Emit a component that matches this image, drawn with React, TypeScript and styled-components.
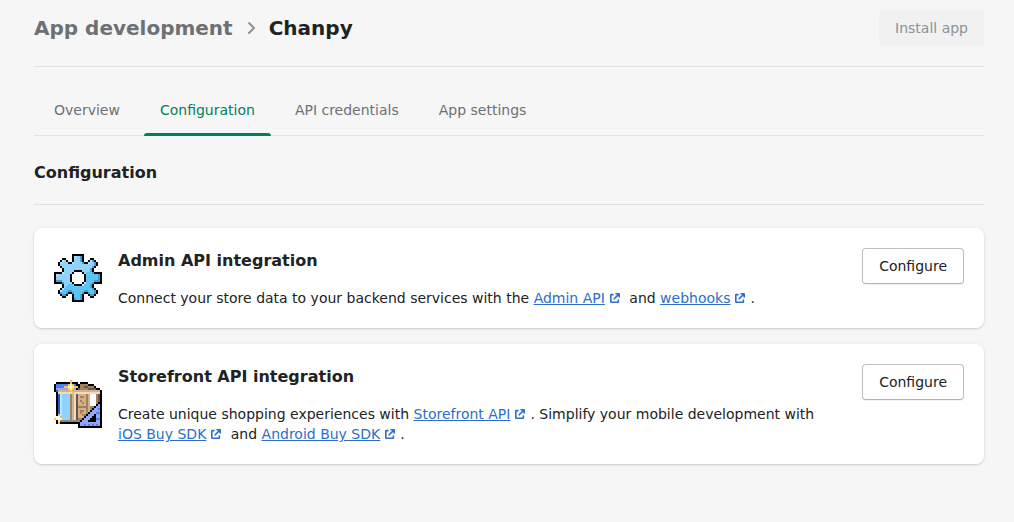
import React from "react";
import styled, { createGlobalStyle } from "styled-components";

const Global = createGlobalStyle`
  *, *::before, *::after { box-sizing: border-box; }
  body { margin: 0; background: #f6f6f6; color: #202223;
    font: 400 14px/20px "DejaVu Sans", sans-serif; }
  h1, h2, h3, p { margin: 0; }
`;

const Page = styled.main`
  padding: 10px 30px 0 34px;
  min-height: 522px;
`;
const Header = styled.header`
  display: flex;
  justify-content: space-between;
  align-items: flex-start;
  height: 57px;
  border-bottom: 1px solid #e2e2e3;
`;
const Breadcrumb = styled.h1`
  display: flex;
  align-items: center;
  height: 36px;
  font-size: 20px;
  line-height: 28px;
  font-weight: 700;
`;
const Parent = styled.span`
  color: #6d7175;
`;
const Chevron = styled.svg`
  width: 20px;
  height: 20px;
  margin: 0 8px;
  fill: #8c9196;
`;
const Button = styled.button<{ $muted?: boolean }>`
  flex: none;
  height: 36px;
  padding: 0 16px;
  font: inherit;
  border-radius: 4px;
  border: ${(p) => (p.$muted ? "none" : "1px solid #babfc3")};
  border-bottom-color: #aeb4b9;
  background: ${(p) => (p.$muted ? "#f1f1f1" : "#fff")};
  color: ${(p) => (p.$muted ? "#8c9196" : "#202223")};
  box-shadow: ${(p) => (p.$muted ? "none" : "0 1px 0 rgba(0, 0, 0, 0.05)")};
`;
const Tabs = styled.nav`
  display: flex;
  gap: 8px;
  height: 69px;
  padding: 17px 4px 0;
  border-bottom: 1px solid #e2e2e3;
`;
const Tab = styled.a<{ $active?: boolean }>`
  height: 52px;
  padding: 16px 16px 0;
  color: ${(p) => (p.$active ? "#008060" : "#6d7175")};
  position: relative;
  &::after {
    content: "";
    display: ${(p) => (p.$active ? "block" : "none")};
    position: absolute;
    left: 0;
    right: 0;
    bottom: 0;
    height: 3px;
    background: #008060;
    border-radius: 3px 3px 0 0;
  }
`;
const SectionTitle = styled.h2`
  height: 69px;
  padding-top: 25px;
  font-size: 16px;
  line-height: 24px;
  font-weight: 700;
  border-bottom: 1px solid #e2e2e3;
`;
const Cards = styled.div`
  display: flex;
  flex-direction: column;
  gap: 16px;
  padding-top: 23px;
`;
const Card = styled.section`
  display: flex;
  align-items: flex-start;
  padding: 20px;
  background: #fff;
  border-radius: 8px;
  box-shadow: 0 0 5px rgba(23, 24, 24, 0.05), 0 1px 2px rgba(0, 0, 0, 0.15);
`;
const Art = styled.svg`
  flex: none;
  align-self: center;
  width: 48px;
  height: 48px;
`;
const Body = styled.div`
  flex: 1;
  padding: 0 32px 0 16px;
`;
const CardTitle = styled.h3`
  font-size: 16px;
  line-height: 24px;
  font-weight: 700;
  padding-top: 1px;
  margin-bottom: 15px;
`;
const Link = styled.a`
  color: #2c6ecb;
  text-decoration: underline;
`;
const LinkIcon = styled.svg`
  width: 20px;
  height: 20px;
  margin: -4px 0;
  vertical-align: -1px;
  fill: #2c6ecb;
`;

const External = ({ children }: { children: string }) => (
  <>
    <Link>{children}</Link>
    <LinkIcon viewBox="0 0 20 20" aria-hidden="true">
      <path d="M11 5h3a1 1 0 0 1 1 1v3a.8.8 0 0 1-1.600 0V7.700l-3.800 3.800a.8.8 0 0 1-1.100-1.100l3.800-3.800H11A.8.8 0 0 1 11 5z" />
      <path d="M5 7a1.200 1.200 0 0 1 1.200-1.200H8a.8.8 0 0 1 0 1.600H6.600v6h6V12a.8.8 0 0 1 1.600 0v1.800a1.200 1.200 0 0 1-1.200 1.200H6.200A1.200 1.200 0 0 1 5 13.800z" />
    </LinkIcon>
  </>
);

const palette: Record<string, string> = {
  k: "#000000",
  w: "#ffffff",
  h: "#b9e6fd",
  a: "#8fd3fa",
  s: "#5cc4f0",
  t: "#3a9fd4",
  B: "#4b7ff2",
  D: "#3157c9",
  b: "#8fa6fb",
  c: "#b5e7fb",
  n: "#d3b18a",
  l: "#f0dac2",
  m: "#a5805f",
  d: "#6b5548",
  g: "#85878b",
  y: "#ffc445",
  Y: "#fff6b8",
};

// Upper-left quarter of the cog; the other three are mirrored from it.
const cogQuarter = [
  ".........kkk",
  ".........kaa",
  "....kk...kaa",
  "...kaak..kaa",
  "..kaaaakkaaa",
  "..kaaaaaaaaa",
  "...kaaaaaaaa",
  "....kaaaaaaa",
  "....kaaaaakk",
  "kkkkaaaaakww",
  "kaaaaaaakwww",
  "kaaaaaaakwww",
];
const mirror = (s: string) => s + s.split("").reverse().join("");
const cogTop = cogQuarter.map(mirror);
const cogShape = [...cogTop, ...[...cogTop].reverse()];
const gear = cogShape.map((row, y) =>
  row
    .split("")
    .map((c, x) => {
      if (c !== "a") return c;
      const at = (cx: number, cy: number) => cogShape[cy][cx];
      if (y > 12 && at(x, y + 1) === "k" && x !== 11 && x !== 12) return "t";
      if (x > 12 && at(x + 1, y) === "k") return "t";
      if (at(x - 1, y) === "k" && at(x, y - 1) === "k") return "h";
      return x + y * 1.5 > 29 ? "s" : "a";
    })
    .join("")
);

const storefront = [
  "........y...............",
  ".kkkkkkkykkk.kkkk.......",
  "kBBBBBByYyBkkmmmmkkk....",
  "kBBBByyYwYyykmmddmmmk...",
  "kbbbbbbyYybkdmmmmddddkk.",
  "kDnnnnnnynnnnnnnnnnnnnnk",
  ".klllllllylllllllllllllk",
  ".kDcaaaamnldnnnnmnwwwmdk",
  ".kDcaaaamnldnmmnmnwwwmdk",
  ".kDcaaaamnldnnnnmnwwwmdk",
  ".kDcaaaamnldnmnnmnwwwmdk",
  ".kDcaaaamnldnnmnmnwwwmkk",
  ".kDcaaaamnldnnnnmnwwwkbk",
  ".kDcaaaamnldmmmmmnmmkbbk",
  ".kDcaaaamnldnnnnmnmkbbBk",
  ".kDcaaaamnldnmmnmnkbbbbk",
  ".kDcaaaamnldnmnnmkbbbBBk",
  ".kycaaaamnldnnmmkbbbkbbk",
  "..Yaaaaamnldnnnkbbbkkbbk",
  "yYwYyaaamnldmmkbbbkkkBBk",
  ".kYggggggggggkbbbkkkkbbk",
  ".kykkkkkkkkkkbbbbbbbbbbk",
  "............kbbBbBbBbBbk",
  "............kkkkkkkkkkkk",
];

const PixelArt = ({ rows }: { rows: string[] }) => (
  <Art viewBox="0 0 24 24" shapeRendering="crispEdges" aria-hidden="true">
    {rows.flatMap((row, y) =>
      row.split("").map((c, x) =>
        palette[c] ? <rect key={`${x}-${y}`} x={x} y={y} width="1" height="1" fill={palette[c]} /> : null
      )
    )}
  </Art>
);

export default function App() {
  return (
    <Page>
      <Global />
      <Header>
        <Breadcrumb>
          <Parent>App development</Parent>
          <Chevron viewBox="0 0 20 20" aria-hidden="true">
            <path d="M8 16a1 1 0 0 1-.7-1.700L11.600 10 7.300 5.700a1 1 0 0 1 1.400-1.400l5 5a1 1 0 0 1 0 1.400l-5 5A1 1 0 0 1 8 16z" />
          </Chevron>
          Chanpy
        </Breadcrumb>
        <Button $muted disabled>Install app</Button>
      </Header>
      <Tabs>
        <Tab>Overview</Tab>
        <Tab $active>Configuration</Tab>
        <Tab>API credentials</Tab>
        <Tab>App settings</Tab>
      </Tabs>
      <SectionTitle>Configuration</SectionTitle>
      <Cards>
        <Card>
          <PixelArt rows={gear} />
          <Body>
            <CardTitle>Admin API integration</CardTitle>
            <p>
              Connect your store data to your backend services with the <External>Admin API</External>{" "}
              and <External>webhooks</External>.
            </p>
          </Body>
          <Button>Configure</Button>
        </Card>
        <Card>
          <PixelArt rows={storefront} />
          <Body>
            <CardTitle>Storefront API integration</CardTitle>
            <p>
              Create unique shopping experiences with <External>Storefront API</External>. Simplify your
              mobile development with <External>iOS Buy SDK</External>{" "}
              and <External>Android Buy SDK</External>.
            </p>
          </Body>
          <Button>Configure</Button>
        </Card>
      </Cards>
    </Page>
  );
}
